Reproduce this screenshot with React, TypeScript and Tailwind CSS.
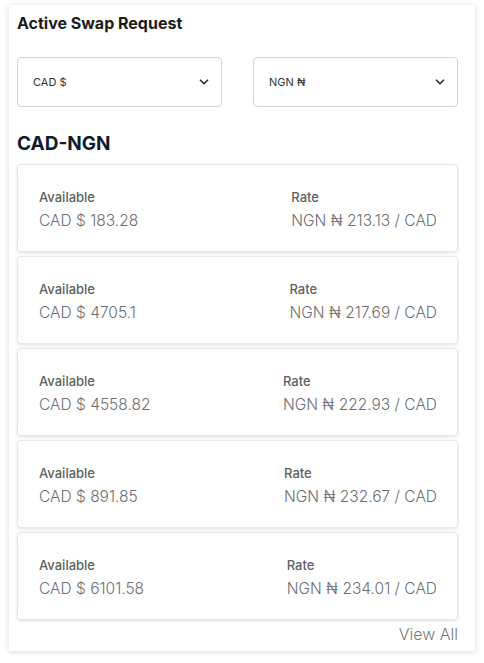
import { ChevronDown } from "lucide-react";

const rows = [
  { available: "183.28", rate: "213.13" },
  { available: "4705.1", rate: "217.69" },
  { available: "4558.82", rate: "222.93" },
  { available: "891.85", rate: "232.67" },
  { available: "6101.58", rate: "234.01" },
];

function CurrencySelect({ label }: { label: string }) {
  return (
    <div className="flex h-[50px] flex-1 items-center justify-between rounded-[4px] border border-[#d4d4d8] bg-white pl-[15px] pr-[10px]">
      <span className="text-[11px] text-[#333]">{label}</span>
      <ChevronDown className="h-[14px] w-[14px] text-[#333]" strokeWidth={3} />
    </div>
  );
}

export default function App() {
  return (
    <div className="min-h-screen bg-white pl-[9px] pr-[9px] pt-[5px] font-['Inter',sans-serif]">
      <div className="bg-white pb-[6px] pl-[8px] pr-[17px] pt-[8px] shadow-[0_1px_6px_rgba(0,0,0,0.15)]">
        <h2 className="text-[16px] font-bold leading-[20px] text-[#1c1c1c]">Active Swap Request</h2>

        <div className="mt-[24px] flex gap-[31px]">
          <CurrencySelect label="CAD $" />
          <CurrencySelect label="NGN ₦" />
        </div>

        <h3 className="mt-[23px] text-[19px] font-bold leading-[28px] text-[#0e1b2c]">CAD-NGN</h3>

        <div className="mt-[6px] flex flex-col gap-[4px]">
          {rows.map((r, i) => (
            <div
              key={i}
              className="flex h-[88px] items-center justify-between rounded-[4px] border border-[#e8e8e8] bg-white pl-[21px] pr-[20px] shadow-[0_1px_3px_rgba(0,0,0,0.12)]"
            >
              <div className="flex flex-col pt-[4px]">
                <span className="text-[13px] font-medium leading-[20px] text-[#5f5f5f]">Available</span>
                <span className="mt-[2px] text-[15.5px] font-light leading-[24px] text-[#6e6e72]">CAD $ {r.available}</span>
              </div>
              <div className="flex flex-col pt-[4px]">
                <span className="text-[13px] font-medium leading-[20px] text-[#5f5f5f]">Rate</span>
                <span className="mt-[2px] text-[15.5px] font-light leading-[24px] text-[#6e6e72]">
                  NGN ₦ {r.rate} / CAD
                </span>
              </div>
            </div>
          ))}
        </div>

        <div className="mt-[3px] text-right text-[16px] font-light leading-[22px] text-[#7a7a7a]">View All</div>
      </div>
    </div>
  );
}
